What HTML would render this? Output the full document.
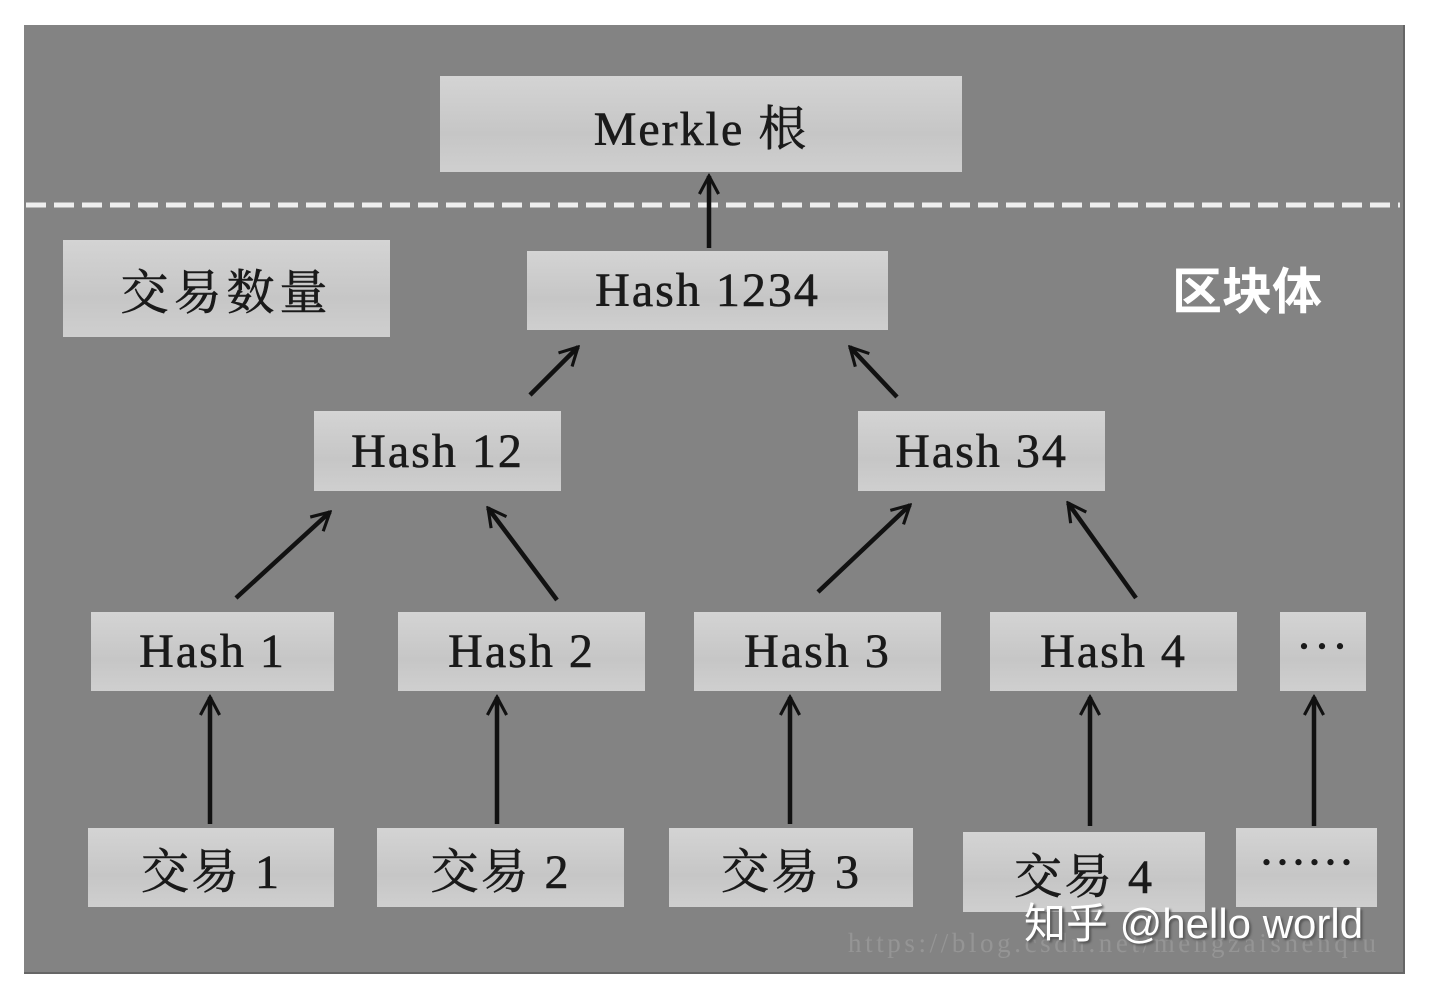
<!DOCTYPE html><html><head><meta charset="utf-8"><style>
body{margin:0;width:1456px;height:990px;background:#fff;position:relative;overflow:hidden}
#p{position:absolute;left:24px;top:25px;width:1379px;height:947px;background:#838383;border-right:2px solid #666;border-bottom:2px solid #666}
.b{position:absolute;background:linear-gradient(180deg,#d4d4d4,#c6c6c6 60%,#cfcfcf);display:flex;align-items:center;justify-content:center;font-family:"Liberation Serif","Noto Serif CJK SC",serif;color:#1a1a1a;font-size:48px;letter-spacing:2px;-webkit-text-stroke:0.6px #1a1a1a}
svg{position:absolute;left:0;top:0}
</style></head><body>
<div id="p"></div>
<div class="b" style="left:440px;top:76px;width:522px;height:96px">Merkle 根</div>
<div class="b" style="left:63px;top:240px;width:327px;height:97px;letter-spacing:5px">交易数量</div>
<div class="b" style="left:527px;top:251px;width:361px;height:79px">Hash 1234</div>
<div class="b" style="left:314px;top:411px;width:247px;height:80px">Hash 12</div>
<div class="b" style="left:858px;top:411px;width:247px;height:80px">Hash 34</div>
<div class="b" style="left:91px;top:612px;width:243px;height:79px">Hash 1</div>
<div class="b" style="left:398px;top:612px;width:247px;height:79px">Hash 2</div>
<div class="b" style="left:694px;top:612px;width:247px;height:79px">Hash 3</div>
<div class="b" style="left:990px;top:612px;width:247px;height:79px">Hash 4</div>
<div class="b" style="left:1280px;top:612px;width:86px;height:79px;padding-bottom:10px;box-sizing:border-box">···</div>
<div class="b" style="left:88px;top:828px;width:246px;height:79px">交易 1</div>
<div class="b" style="left:377px;top:828px;width:247px;height:79px">交易 2</div>
<div class="b" style="left:669px;top:828px;width:244px;height:79px">交易 3</div>
<div class="b" style="left:963px;top:832px;width:242px;height:80px">交易 4</div>
<div class="b" style="left:1236px;top:828px;width:141px;height:79px;padding-bottom:10px;box-sizing:border-box;letter-spacing:0">······</div>
<div style="position:absolute;left:1172px;top:252px;font:bold 50px 'Noto Sans CJK SC',sans-serif;color:#fff">区块体</div>
<svg width="1456" height="990">
<defs><marker id="a" viewBox="0 0 20 20" refX="18" refY="10" markerWidth="24" markerHeight="24" markerUnits="userSpaceOnUse" orient="auto"><path d="M3 2L18 10L3 18" fill="none" stroke="#111" stroke-width="2.6"/></marker></defs>
<line x1="26" y1="205" x2="1400" y2="205" stroke="#eee" stroke-width="5" stroke-dasharray="20 8"/>
<g stroke="#111" stroke-width="4.5" marker-end="url(#a)" fill="none">
<line x1="709" y1="248" x2="709" y2="176"/>
<line x1="530" y1="395" x2="578" y2="347"/>
<line x1="897" y1="397" x2="850" y2="347"/>
<line x1="236" y1="598" x2="330" y2="512"/>
<line x1="557" y1="600" x2="488" y2="508"/>
<line x1="818" y1="592" x2="910" y2="505"/>
<line x1="1136" y1="598" x2="1068" y2="503"/>
<line x1="210" y1="824" x2="210" y2="697"/>
<line x1="497" y1="824" x2="497" y2="697"/>
<line x1="790" y1="824" x2="790" y2="697"/>
<line x1="1090" y1="826" x2="1090" y2="697"/>
<line x1="1314" y1="826" x2="1314" y2="697"/>
</g></svg>
<div style="position:absolute;left:848px;top:928px;font:27px 'Liberation Serif',serif;letter-spacing:3.6px;color:#9a9a9a;opacity:.8">https://blog.csdn.net/mengzaishenqiu</div>
<div style="position:absolute;left:1024px;top:890px;font:42px 'Liberation Sans','Noto Sans CJK SC',sans-serif;color:#fff;text-shadow:2px 2px 2px #555">知乎 @hello world</div>
</body></html>
